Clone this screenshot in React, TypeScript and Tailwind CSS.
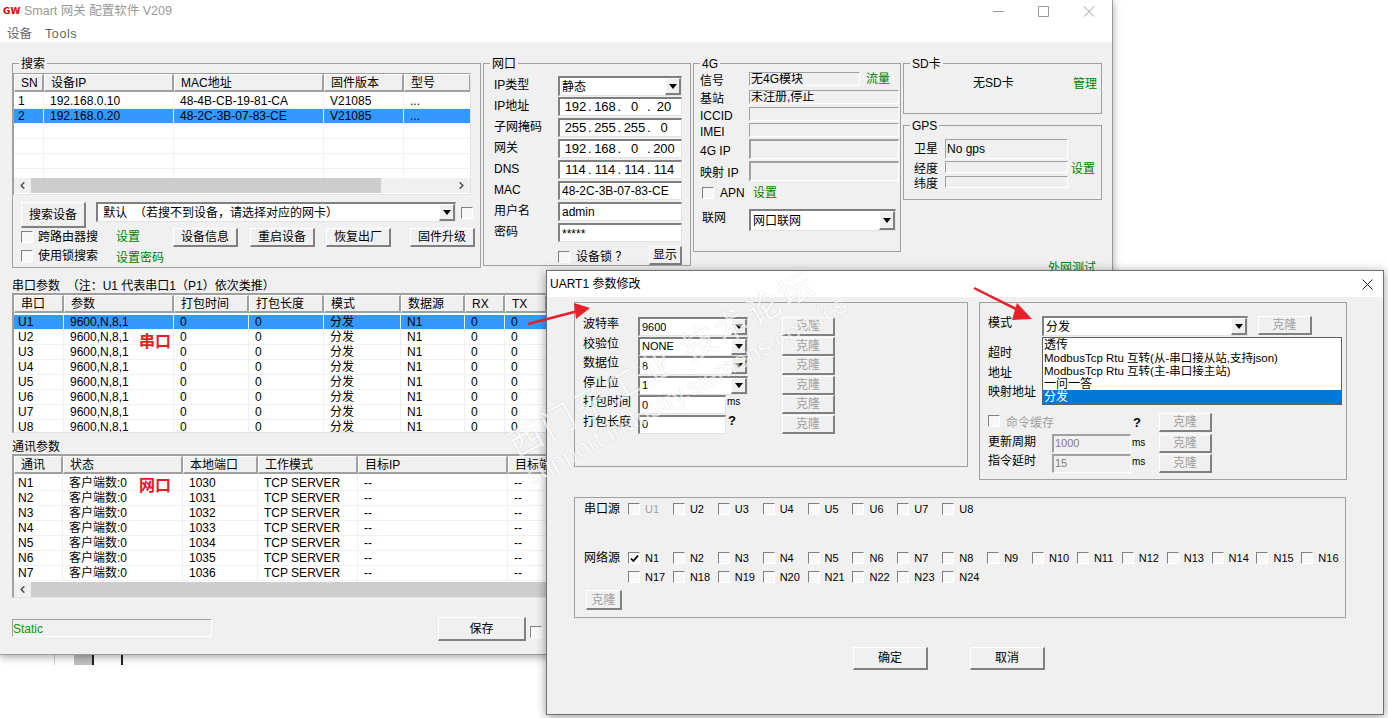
import type { ReactNode } from 'react';
import { ChevronLeft, ChevronRight } from 'lucide-react';

const serialCols = 'grid-cols-[50px_110px_75px_75px_77px_64px_40px_42px_20px]';
const commCols = 'grid-cols-[49px_120px_75px_100px_150px_60px]';
const searchCols = 'grid-cols-[30px_130px_150px_80px_67px]';

const serialRows = ['U1', 'U2', 'U3', 'U4', 'U5', 'U6', 'U7', 'U8'].map((u) => [
  u, '9600,N,8,1', '0', '0', '分发', 'N1', '0', '0', '',
]);
const commRows = [0, 1, 2, 3, 4, 5, 6, 7].map((i) =>
  i < 7 ? [`N${i + 1}`, '客户端数:0', `${1030 + i}`, 'TCP SERVER', '--', '--'] : ['', '', '', '', '', ''],
);
const searchRows = [
  ['1', '192.168.0.10', '48-4B-CB-19-81-CA', 'V21085', '...'],
  ['2', '192.168.0.20', '48-2C-3B-07-83-CE', 'V21085', '...'],
  ['', '', '', '', ''],
  ['', '', '', '', ''],
  ['', '', '', '', ''],
  ['', '', '', '', ''],
];

function Group({ title, className, children }: { title: string; className: string; children?: ReactNode }) {
  return (
    <div className={`relative shrink-0 border border-[#a0a0a0] ${className}`}>
      <span className="absolute left-1.5 -top-[7px] bg-[#f0f0f0] px-0.5 leading-[14px]">{title}</span>
      {children}
    </div>
  );
}

function Check({ checked, className = '' }: { checked?: boolean; className?: string }) {
  return (
    <span className={`flex h-3 w-3 shrink-0 items-center justify-center border-t border-l border-t-[#808080] border-l-[#808080] border-r border-b border-r-white border-b-white bg-[#f7f7f7] ${className}`}>
      {checked && (
        <svg width="9" height="9" viewBox="0 0 9 9">
          <path d="M1 4.5 3.4 7 8 1.5" fill="none" stroke="#000" strokeWidth="1.8" />
        </svg>
      )}
    </span>
  );
}

function Btn({ label, className = '', disabled }: { label: string; className?: string; disabled?: boolean }) {
  return (
    <div className={`flex shrink-0 items-center justify-center border-t border-l border-t-white border-l-white border-r-2 border-b-2 border-r-[#808080] border-b-[#808080] bg-[#f0f0f0] ${disabled ? 'text-[#a0a0a0]' : ''} ${className}`}>
      {label}
    </div>
  );
}

function Arrow({ className = '' }: { className?: string }) {
  return (
    <span className={`ml-auto flex shrink-0 items-center justify-center border-t border-l border-t-white border-l-white border-r-2 border-b-2 border-r-[#808080] border-b-[#808080] bg-[#f0f0f0] ${className}`}>
      <svg width="8" height="5" viewBox="0 0 8 5">
        <path d="M0 0h8L4 5z" fill="#000" />
      </svg>
    </span>
  );
}

function Combo({ text, className = '' }: { text: string; className?: string }) {
  return (
    <div className={`flex shrink-0 items-center border-t-2 border-l-2 border-t-[#808080] border-l-[#808080] border-r border-b border-r-[#e3e3e3] border-b-[#e3e3e3] bg-white pl-0.5 ${className}`}>
      <span className="truncate">{text}</span>
      <Arrow className="h-full w-4" />
    </div>
  );
}

function Field({ text = '', className = '', children }: { text?: string; className?: string; children?: ReactNode }) {
  return (
    <div className={`flex shrink-0 items-center border-t-2 border-l-2 border-t-[#808080] border-l-[#808080] border-r border-b border-r-[#e3e3e3] border-b-[#e3e3e3] bg-white pl-0.5 ${className}`}>
      {text}
      {children}
    </div>
  );
}

function ReadOnly({ text = '', className = '' }: { text?: string; className?: string }) {
  return (
    <div className={`flex shrink-0 items-center overflow-hidden border-t border-l border-t-[#a0a0a0] border-l-[#a0a0a0] border-r border-b border-r-white border-b-white pl-px ${className}`}>
      {text}
    </div>
  );
}

function IpField({ parts }: { parts: string[] }) {
  return (
    <Field className="h-[19px] w-[124px] pl-[3px] text-[13px]">
      {parts.map((p, i) => (
        <span key={i} className="flex w-[30px]">
          <span className="w-[25px] text-center">{p}</span>
          {i < 3 && <span>.</span>}
        </span>
      ))}
    </Field>
  );
}

function Scrollbar({ thumb, right = true }: { thumb: string; right?: boolean }) {
  return (
    <div className="flex h-[15px] shrink-0 items-center bg-[#f0f0f0]">
      <span className="flex w-[17px] shrink-0 justify-center">
        <ChevronLeft size={11} strokeWidth={3.5} color="#505050" />
      </span>
      <span className={`h-full bg-[#cdcdcd] ${thumb}`} />
      {right && (
        <span className="ml-auto flex w-[17px] shrink-0 justify-center">
          <ChevronRight size={11} strokeWidth={3.5} color="#505050" />
        </span>
      )}
    </div>
  );
}

function ListView({
  cols,
  headers,
  rows,
  selected,
  frame,
  body,
  children,
}: {
  cols: string;
  headers: string[];
  rows: string[][];
  selected?: number;
  frame: string;
  body: string;
  children?: ReactNode;
}) {
  return (
    <div className={`flex shrink-0 flex-col overflow-hidden border-r border-b border-r-[#e3e3e3] border-b-[#e3e3e3] border-t-[#a0a0a0] border-l-[#a0a0a0] bg-white ${frame}`}>
      <div className={`grid h-[18px] shrink-0 ${cols}`}>
        {headers.map((h, i) => (
          <div key={i} className="overflow-hidden whitespace-nowrap border-t border-l border-t-white border-l-white border-r-2 border-b-2 border-r-[#a0a0a0] border-b-[#a0a0a0] bg-[#f0f0f0] pl-1.5 leading-[17px]">
            {h}
          </div>
        ))}
      </div>
      <div className={`mt-0.5 overflow-hidden ${body}`}>
        {rows.map((row, r) => (
          <div key={r} className={`grid h-[15px] border-b border-[#f0f0f0] ${cols} ${r === selected ? 'bg-[#3399ff]' : ''}`}>
            {row.map((c, i) => (
              <div key={i} className={`overflow-hidden whitespace-nowrap border-r border-[#f0f0f0] leading-[15px] ${i === 0 ? 'pl-1' : 'pl-1.5'}`}>
                {c}
              </div>
            ))}
          </div>
        ))}
      </div>
      {children}
    </div>
  );
}

function FormRow({ label, children }: { label: string; children: ReactNode }) {
  return (
    <div className="flex h-[21px] items-start">
      <span className="w-[64px] pt-0.5 leading-[14px]">{label}</span>
      {children}
    </div>
  );
}

function LabeledRow({ label, h, className = '', children }: { label: string; h: string; className?: string; children?: ReactNode }) {
  return (
    <div className={`flex items-center ${h} ${className}`}>
      <span className="w-[49px] shrink-0 pt-1 leading-[14px]">{label}</span>
      {children}
    </div>
  );
}

function SearchBox() {
  return (
    <Group title="搜索" className="h-[205px] w-[469px] pt-[9px]">
      <ListView
        cols={searchCols}
        headers={['SN', '设备IP', 'MAC地址', '固件版本', '型号']}
        rows={searchRows}
        selected={1}
        frame="h-[122px] w-[458px] border-t border-l"
        body="h-[84px]"
      >
        <Scrollbar thumb="w-[350px]" />
      </ListView>
      <div className="mt-[7px] ml-2 flex items-start">
        <Btn label="搜索设备" className="h-[26px] w-[65px]" />
        <Combo text={'\u00a0默认\u00a0\u00a0（若搜不到设备，请选择对应的网卡）'} className="ml-2.5 h-5 w-[360px]" />
        <Check className="mt-[5px] ml-[5px]" />
      </div>
      <div className="ml-2 flex items-start">
        <div className="w-[152px] shrink-0">
          <div className="mt-[3px] flex h-3 items-center">
            <Check />
            <span className="ml-[5px] w-[78px]">跨路由器搜</span>
            <span className="text-[#008000]">设置</span>
          </div>
          <div className="mt-[7px] flex h-3 items-center">
            <Check />
            <span className="ml-[5px] w-[78px]">使用锁搜索</span>
            <span className="mt-1 text-[#008000]">设置密码</span>
          </div>
        </div>
        <Btn label="设备信息" className="h-[19px] w-[65px]" />
        <Btn label="重启设备" className="ml-3 h-[19px] w-[65px]" />
        <Btn label="恢复出厂" className="ml-[11px] h-[19px] w-[65px]" />
        <Btn label="固件升级" className="ml-[19px] h-[19px] w-[65px]" />
      </div>
    </Group>
  );
}

function NetBox() {
  return (
    <Group title="网口" className="ml-0.5 h-[203px] w-[208px] pt-3 pl-2.5">
      <FormRow label="IP类型">
        <Combo text="静态" className="h-5 w-[124px]" />
      </FormRow>
      <FormRow label="IP地址">
        <IpField parts={['192', '168', '0', '20']} />
      </FormRow>
      <FormRow label="子网掩码">
        <IpField parts={['255', '255', '255', '0']} />
      </FormRow>
      <FormRow label="网关">
        <IpField parts={['192', '168', '0', '200']} />
      </FormRow>
      <FormRow label="DNS">
        <IpField parts={['114', '114', '114', '114']} />
      </FormRow>
      <FormRow label="MAC">
        <Field text="48-2C-3B-07-83-CE" className="h-[19px] w-[124px]" />
      </FormRow>
      <FormRow label="用户名">
        <Field text="admin" className="h-[19px] w-[124px]" />
      </FormRow>
      <FormRow label="密码">
        <Field text="*****" className="h-[19px] w-[124px] items-start" />
      </FormRow>
      <div className="ml-16 flex items-center">
        <Check className="mt-1" />
        <span className="mt-1 ml-1.5 w-[73px]">设备锁 ？</span>
        <Btn label="显示" className="mt-px h-[19px] w-[33px]" />
      </div>
    </Group>
  );
}

function CellularBox() {
  return (
    <Group title="4G" className="ml-0.5 h-[189px] w-[208px] pt-2 pl-1.5">
      <LabeledRow label="信号" h="h-[14px]">
        <ReadOnly text="无4G模块" className="h-[14px] w-[111px]" />
        <span className="ml-1.5 text-[#008000]">流量</span>
      </LabeledRow>
      <LabeledRow label="基站" h="h-[14px]" className="mt-1">
        <ReadOnly text="未注册,停止" className="h-[14px] w-[150px]" />
      </LabeledRow>
      <LabeledRow label="ICCID" h="h-[14px]" className="mt-[3px]">
        <ReadOnly className="h-[14px] w-[150px]" />
      </LabeledRow>
      <LabeledRow label="IMEI" h="h-[14px]" className="mt-0.5">
        <ReadOnly className="h-[14px] w-[150px]" />
      </LabeledRow>
      <LabeledRow label="4G IP" h="h-5" className="mt-0.5">
        <ReadOnly className="h-5 w-[150px] border-t-2 border-l-2 border-t-[#808080] border-l-[#808080]" />
      </LabeledRow>
      <LabeledRow label="映射 IP" h="h-5" className="mt-0.5">
        <ReadOnly className="h-5 w-[150px] border-t-2 border-l-2 border-t-[#808080] border-l-[#808080]" />
      </LabeledRow>
      <div className="mt-[5px] ml-0.5 flex h-[13px] items-center">
        <Check />
        <span className="ml-1.5 w-[33px]">APN</span>
        <span className="text-[#008000]">设置</span>
      </div>
      <div className="mt-2.5 ml-0.5 flex h-[22px] items-start">
        <span className="w-[47px] shrink-0 leading-[18px]">联网</span>
        <Combo text="网口联网" className="h-[22px] w-[147px]" />
      </div>
    </Group>
  );
}

function SideBoxes() {
  return (
    <div className="ml-0.5 w-[199px] shrink-0">
      <Group title="SD卡" className="h-[51px] w-full">
        <span className="absolute top-[10px] left-[69px]">无SD卡</span>
        <span className="absolute top-[11px] left-[169px] text-[#008000]">管理</span>
      </Group>
      <Group title="GPS" className="mt-[11px] h-[75px] w-full pt-[13px] pl-2.5">
        <div className="flex h-5 items-center">
          <span className="w-[31px]">卫星</span>
          <ReadOnly text="No gps" className="h-5 w-[123px] items-start" />
        </div>
        <div className="mt-0.5 flex h-3 items-center">
          <span className="w-[31px] pt-1 leading-[14px]">经度</span>
          <ReadOnly className="h-3 w-[123px]" />
          <span className="ml-[3px] pt-1 leading-[14px] text-[#008000]">设置</span>
        </div>
        <div className="mt-[3px] flex h-3 items-center">
          <span className="w-[31px] pt-1 leading-[14px]">纬度</span>
          <ReadOnly className="h-3 w-[123px]" />
        </div>
      </Group>
      <div className="mt-[59px] pr-1.5 text-right text-[#008000]">外网测试</div>
    </div>
  );
}

function TitleBar() {
  return (
    <div className="flex h-[42px] shrink-0 flex-col bg-white">
      <div className="flex h-[23px] items-center pl-[3px]">
        <span className="w-[21px] font-['DejaVu_Sans',sans-serif] text-[9px] font-bold text-[#e00000]">GW</span>
        <span className="text-[12.5px] text-[#999999]">Smart 网关 配置软件 V209</span>
        <svg className="ml-auto mr-[17px]" width="102" height="11" viewBox="0 0 102 11" fill="none" stroke="#9a9a9a">
          <path d="M0 5.5h11M45.5.5h10v10h-10zM91 .5l10 10M101 .5l-10 10" />
        </svg>
      </div>
      <div className="flex h-[19px] items-center pt-1 pl-[7px] text-[12.5px] text-[#666666]">
        <span className="w-[38px]">设备</span>
        <span className="tracking-[0.6px]">Tools</span>
      </div>
    </div>
  );
}

function MainWindow() {
  return (
    <div className="absolute top-0 left-0 flex h-[655px] w-[1113px] flex-col border-r border-b border-[#9a9a9a] bg-[#f0f0f0] shadow-[0_2px_8px_rgba(0,0,0,0.35)]">
      <TitleBar />
      <div className="mt-[21px] ml-3 flex h-[205px] items-start">
        <SearchBox />
        <NetBox />
        <CellularBox />
        <SideBoxes />
      </div>
      <div className="mt-2.5 ml-3 h-[14px] whitespace-pre leading-[16px]">串口参数  （注：U1 代表串口1（P1）依次类推）</div>
      <div className="relative ml-3 mt-px">
        <ListView
          cols={serialCols}
          headers={['串口', '参数', '打包时间', '打包长度', '模式', '数据源', 'RX', 'TX', '']}
          rows={serialRows}
          selected={0}
          frame="h-[140px] w-[560px] border-t-2 border-l-2"
          body="h-[118px]"
        />
        <span className="absolute top-[40px] left-[127px] text-[16px] leading-[18px] font-bold text-[#e02020]">串口</span>
      </div>
      <div className="mt-[5px] ml-3 h-[14px] leading-[18px]">通讯参数</div>
      <div className="relative ml-3 mt-0.5">
        <ListView
          cols={commCols}
          headers={['通讯', '状态', '本地端口', '工作模式', '目标IP', '目标端口']}
          rows={commRows}
          frame="h-[144px] w-[560px] border-t-2 border-l-2"
          body="h-[107px]"
        >
          <Scrollbar thumb="flex-1" right={false} />
        </ListView>
        <span className="absolute top-[23px] left-[127px] text-[16px] leading-[18px] font-bold text-[#e02020]">网口</span>
      </div>
      <div className="mt-[19px] ml-3 flex items-start">
        <div className="mt-0.5 flex h-[18px] w-[200px] items-center border border-t-[#a0a0a0] border-l-[#a0a0a0] border-r-white border-b-white pt-0.5 text-[#00a000]">
          Static
        </div>
        <Btn label="保存" className="ml-[226px] h-6 w-[88px]" />
        <Check className="mt-[9px] ml-1" />
      </div>
    </div>
  );
}

function LeftParams() {
  const combos = [
    ['波特率', '9600'],
    ['校验位', 'NONE'],
    ['数据位', '8'],
    ['停止位', '1'],
  ];
  return (
    <div className="h-[165px] w-[394px] shrink-0 border border-[#a0a0a0] pt-3.5 pl-2">
      {combos.map(([label, value]) => (
        <div key={label} className="flex h-[19.5px] items-start">
          <span className="w-[55px] shrink-0 leading-[14px]">{label}</span>
          <Combo text={value} className="h-[19px] w-[110px] text-[11px]" />
          <Btn label="克隆" disabled className="ml-[34px] h-[19px] w-[53px]" />
        </div>
      ))}
      <div className="flex h-[19.5px] items-start">
        <span className="w-[55px] shrink-0 leading-[14px]">打包时间</span>
        <Field text="0" className="h-[19px] w-[88px] text-[11px]" />
        <span className="w-[56px] pl-px text-[10px] leading-[14px]">ms</span>
        <Btn label="克隆" disabled className="h-[19px] w-[53px]" />
      </div>
      <div className="flex h-[19.5px] items-start">
        <span className="w-[55px] shrink-0 leading-[14px]">打包长度</span>
        <Field text="0" className="h-[19px] w-[88px] text-[11px]" />
        <span className="w-[56px] pl-0.5 text-[13px] leading-[12px] font-bold">?</span>
        <Btn label="克隆" disabled className="h-[19px] w-[53px]" />
      </div>
    </div>
  );
}

function RightParams() {
  return (
    <div className="relative ml-[11px] h-[178px] w-[368px] shrink-0 border border-[#a0a0a0] pt-[13px] pl-2">
      <div className="flex h-[20px] items-start">
        <span className="w-[54px] shrink-0 leading-[14px]">模式</span>
        <Combo text="分发" className="h-5 w-[206px]" />
        <Btn label="克隆" disabled className="ml-2.5 h-[19px] w-[54px]" />
      </div>
      <div className="mt-[9px] h-[20px] leading-[16px]">超时</div>
      <div className="h-5 leading-[16px]">地址</div>
      <div className="flex h-[28px] items-start leading-[14px]">
        <span className="w-[145px]">映射地址</span>
        <span className="mt-2 text-[13px] leading-[14px] font-bold">?</span>
      </div>
      <div className="flex h-[19px] items-center">
        <Check className="mb-1" />
        <span className="ml-1.5 w-[127px] text-[#a0a0a0]">命令缓存</span>
        <span className="w-[26px] text-[13px] font-bold">?</span>
        <Btn label="克隆" disabled className="h-[19px] w-[53px]" />
      </div>
      <div className="mt-px flex h-5 items-center">
        <span className="w-16 shrink-0 pb-0.5">更新周期</span>
        <ReadOnly text="1000" className="h-[19px] w-[79px] border-t-2 border-l-2 border-t-[#808080] border-l-[#808080] pl-1 text-[11px] text-[#808080]" />
        <span className="w-7 pl-px pb-0.5 text-[10px]">ms</span>
        <Btn label="克隆" disabled className="h-[19px] w-[53px]" />
      </div>
      <div className="flex h-5 items-center">
        <span className="w-16 shrink-0 pb-1">指令延时</span>
        <ReadOnly text="15" className="h-[19px] w-[79px] border-t-2 border-l-2 border-t-[#808080] border-l-[#808080] pl-1 text-[11px] text-[#808080]" />
        <span className="w-7 pl-px pb-1 text-[10px]">ms</span>
        <Btn label="克隆" disabled className="h-[19px] w-[53px]" />
      </div>
      <div className="absolute top-[34px] left-[62px] w-[300px] border border-[#606060] bg-white leading-[14px]">
        <div className="h-[13px] pl-px">透传</div>
        <div className="h-[13px] pl-px text-[11.5px]">ModbusTcp Rtu 互转(从-串口接从站,支持json)</div>
        <div className="h-[13px] pl-px text-[11.5px]">ModbusTcp Rtu 互转(主-串口接主站)</div>
        <div className="h-[13px] pl-px">一问一答</div>
        <div className="h-[14px] bg-[#0078d7] pl-px text-white">分发</div>
      </div>
    </div>
  );
}

function CheckRow({ items, checked, disabledFirst, className = '' }: { items: string[]; checked?: string; disabledFirst?: boolean; className?: string }) {
  return (
    <div className={`flex h-3 items-center ${className}`}>
      {items.map((n, i) => (
        <span key={n} className="flex w-[44.9px] shrink-0 items-center">
          <Check checked={n === checked} />
          <span className={`ml-[5px] text-[11px] ${disabledFirst && i === 0 ? 'text-[#a0a0a0]' : ''}`}>{n}</span>
        </span>
      ))}
    </div>
  );
}

function SourceBox() {
  const serial = ['U1', 'U2', 'U3', 'U4', 'U5', 'U6', 'U7', 'U8'];
  const net = Array.from({ length: 24 }, (_, i) => `N${i + 1}`);
  return (
    <div className="mt-[17px] h-[121px] w-[772px] border border-[#a0a0a0] pt-[5px] pl-[9px]">
      <div className="flex items-center">
        <span className="w-11 shrink-0 leading-3">串口源</span>
        <CheckRow items={serial} disabledFirst />
      </div>
      <div className="mt-[37px] flex items-center">
        <span className="w-11 shrink-0 leading-3">网络源</span>
        <CheckRow items={net.slice(0, 16)} checked="N1" />
      </div>
      <CheckRow items={net.slice(16)} className="mt-[7px] ml-11" />
      <Btn label="克隆" disabled className="mt-[7px] ml-0.5 h-5 w-9" />
    </div>
  );
}

function Dialog() {
  return (
    <div className="absolute top-[270px] left-[546px] flex h-[445px] w-[838px] flex-col border border-[#707070] bg-[#f0f0f0] shadow-[0_2px_10px_rgba(0,0,0,0.4)]">
      <div className="flex h-[26px] shrink-0 items-center bg-white pl-[3px]">
        <span>UART1 参数修改</span>
        <svg className="ml-auto mr-2.5" width="11" height="11" viewBox="0 0 11 11" fill="none" stroke="#222">
          <path d="M.5.5l10 10M10.5.5l-10 10" />
        </svg>
      </div>
      <div className="mt-[5px] ml-[27px] flex items-start">
        <LeftParams />
        <RightParams />
      </div>
      <div className="ml-[27px]">
        <SourceBox />
      </div>
      <div className="mt-[29px] ml-[306px] flex">
        <Btn label="确定" className="h-[23px] w-[75px]" />
        <Btn label="取消" className="ml-[42px] h-[23px] w-[75px]" />
      </div>
    </div>
  );
}

export default function App() {
  return (
    <div className="relative h-[718px] w-[1388px] overflow-hidden bg-white font-['Liberation_Sans','Noto_Sans_CJK_SC',sans-serif] text-[12px] text-black">
      {/* whatever sits behind the window on the desktop */}
      <div className="absolute top-[655px] left-[54px] h-[10px] w-px bg-[#d0d0d0]" />
      <div className="absolute top-[655px] left-[74px] h-[10px] w-[18px] bg-[#c0c0c0]" />
      <div className="absolute top-[655px] left-[92px] h-[10px] w-0.5 bg-[#202020]" />
      <div className="absolute top-[655px] left-[121px] h-[10px] w-0.5 bg-[#202020]" />

      <MainWindow />
      <Dialog />

      {/* forum watermark */}
      <div className="pointer-events-none absolute top-[426px] left-[518px] w-[420px] origin-left -rotate-[29deg] whitespace-nowrap text-white opacity-60 [text-shadow:0_0_1px_#a8a8a8]">
        <div className="text-[34px] leading-[40px] tracking-[3px]">西门子工业 技术论坛</div>
        <div className="text-[25px] leading-[28px]">support.industry.siemens.com/cs</div>
      </div>

      {/* red annotation arrows */}
      <svg className="pointer-events-none absolute top-0 left-0" width="1388" height="718" viewBox="0 0 1388 718">
        <path d="M528 324 578 311" stroke="#e8202a" strokeWidth="2.5" />
        <path d="M590 308 574 303 576 319z" fill="#e8202a" />
        <path d="M974 288 1020 311" stroke="#e8202a" strokeWidth="2.5" />
        <path d="M1032 319 1017 303 1012 320z" fill="#e8202a" />
      </svg>
    </div>
  );
}
